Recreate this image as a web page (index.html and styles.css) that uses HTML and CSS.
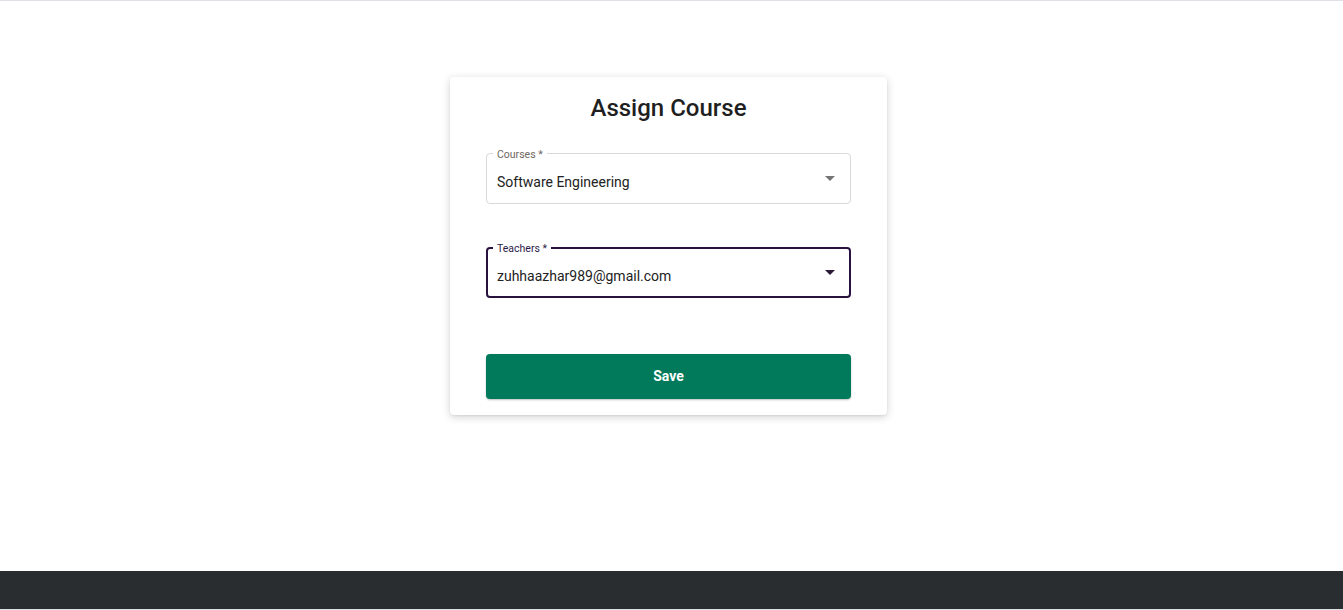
FILE: index.html
```html
<!DOCTYPE html>
<html>
<head>
<meta charset="utf-8">
<link rel="stylesheet" href="styles.css">
</head>
<body>
<div class="page">
  <main class="main">
    <div class="card">
      <h2 class="title">Assign Course</h2>
      <div class="field">
        <span class="label">Courses *</span>
        <span class="value">Software Engineering</span>
        <svg class="arrow" width="10" height="5" viewBox="0 0 10 5"><path d="M0 0h10L5 5z"/></svg>
      </div>
      <div class="field focused">
        <span class="label">Teachers *</span>
        <span class="value">zuhhaazhar989@gmail.com</span>
        <svg class="arrow" width="10" height="5" viewBox="0 0 10 5"><path d="M0 0h10L5 5z"/></svg>
      </div>
      <button class="save">Save</button>
    </div>
  </main>
  <footer class="footer"></footer>
</div>
</body>
</html>
```
FILE: styles.css
```css
* { box-sizing: border-box; }
html, body { margin: 0; padding: 0; }
body {
  font-family: Roboto, "Liberation Sans", sans-serif;
  color: #212121;
  background: #fff;
}
.page {
  height: 610px;
  display: flex;
  flex-direction: column;
  border-top: 1px solid #dee2e6;
  border-bottom: 1px solid #dee2e6;
}
.main {
  flex: 1;
  display: flex;
  justify-content: center;
  align-items: flex-start;
  padding-top: 76px;
  padding-right: 6px;
}
.card {
  width: 437px;
  background: #fff;
  border-radius: 4px;
  box-shadow: 0 2px 8px rgba(0,0,0,0.18), 0 1px 2px rgba(0,0,0,0.06);
  padding: 15px 36px 16px;
  display: flex;
  flex-direction: column;
}
.title {
  margin: 0;
  font-size: 24px;
  line-height: 32px;
  font-weight: 500;
  text-align: center;
  color: #1f1f1f;
}
.field {
  position: relative;
  height: 51px;
  border: 1px solid #d9d9d9;
  border-radius: 4px;
  display: flex;
  align-items: center;
  padding: 7px 15px 0 10px;
  margin-top: 29px;
}
.field.focused {
  border: 2px solid #2a1240;
  padding-left: 9px;
  padding-right: 14px;
  margin-top: 43px;
}
.label {
  position: absolute;
  top: -5px;
  left: 6px;
  padding: 0 4px;
  background: #fff;
  font-size: 10.5px;
  line-height: 12px;
  color: #6e6660;
}
.focused .label {
  top: -6px;
  left: 5px;
  color: #2c1a4a;
}
.value {
  flex: 1;
  font-size: 14px;
  color: #222;
}
.arrow { fill: #757575; margin-top: -7px; }
.focused .arrow { fill: #2a1836; }
.save {
  margin-top: 56px;
  height: 45px;
  border: none;
  border-radius: 4px;
  background: #017a5b;
  color: #fff;
  font-family: Roboto, "Liberation Sans", sans-serif;
  font-weight: 700;
  font-size: 14px;
  line-height: 14px;
  padding: 0 0 1px;
  box-shadow: 0 1px 2px rgba(0,0,0,0.25);
}
.footer {
  height: 38px;
  background: #292d30;
}
```
